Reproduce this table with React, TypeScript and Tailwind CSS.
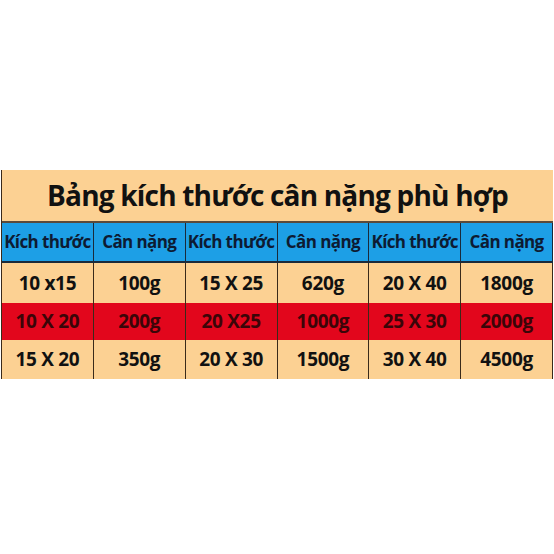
const headers = ["Kích thước", "Cân nặng", "Kích thước", "Cân nặng", "Kích thước", "Cân nặng"];

const rows = [
  { bg: "bg-[#fcd193]", text: "text-[#111]", h: "h-[40px]", cells: ["10 x15", "100g", "15 X 25", "620g", "20 X 40", "1800g"] },
  { bg: "bg-[#e2061c]", text: "text-[#3b0508]", h: "h-[37px]", cells: ["10 X 20", "200g", "20 X25", "1000g", "25 X 30", "2000g"] },
  { bg: "bg-[#fcd193]", text: "text-[#111]", h: "h-[39px]", cells: ["15 X 20", "350g", "20 X 30", "1500g", "30 X 40", "4500g"] },
];

export default function App() {
  return (
    <div className="w-[554px] h-[554px] bg-white pt-[170px] pl-[1px] font-['Open_Sans',sans-serif]">
      <div className="w-[552px] border-l border-[#3a2a1a]">
        <div className="h-[53px] bg-[#fcd193] flex items-center justify-center border-b-2 border-[#5a4a3a]">
          <h1 className="text-[28px] font-bold tracking-[-0.8px] text-[#111] leading-none pb-[2px]">
            Bảng kích thước cân nặng phù hợp
          </h1>
        </div>
        <div className="grid grid-cols-6 h-[40px] bg-[#1d9fe6] border-b-2 border-[#1a2a3a]">
          {headers.map((t, i) => (
            <div
              key={i}
              className="flex items-center justify-center border-r border-[#1a2a3a] text-[17px] font-bold tracking-[-0.6px] text-[#0d1b33]"
            >
              {t}
            </div>
          ))}
        </div>
        {rows.map((r, ri) => (
          <div key={ri} className={`grid grid-cols-6 ${r.h} ${r.bg}`}>
            {r.cells.map((c, ci) => (
              <div
                key={ci}
                className={`flex items-center justify-center border-r border-[#3a2a1a] text-[19px] font-bold tracking-[-0.3px] ${r.text}`}
              >
                {c}
              </div>
            ))}
          </div>
        ))}
      </div>
    </div>
  );
}
